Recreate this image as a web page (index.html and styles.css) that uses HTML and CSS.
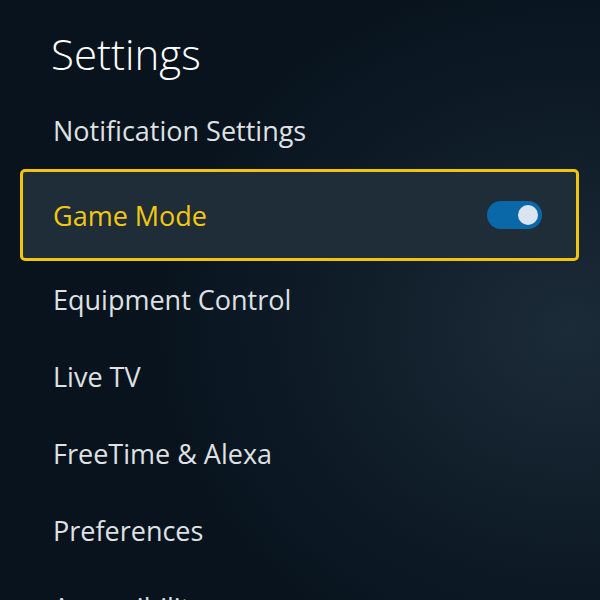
FILE: index.html
```html
<!DOCTYPE html>
<html lang="en">
<head>
<meta charset="utf-8">
<title>Settings</title>
<link rel="stylesheet" href="styles.css">
</head>
<body>
<main class="screen">
  <h1 class="title">Settings</h1>
  <ul class="menu">
    <li class="item">Notification Settings</li>
    <li class="item item-selected">
      <span class="label">Game Mode</span>
      <span class="toggle"><span class="knob"></span></span>
    </li>
    <li class="item">Equipment Control</li>
    <li class="item">Live TV</li>
    <li class="item">FreeTime &amp; Alexa</li>
    <li class="item">Preferences</li>
    <li class="item">Accessibility</li>
  </ul>
</main>
</body>
</html>
```

FILE: styles.css
```css
html, body {
  margin: 0;
  padding: 0;
  height: 100%;
  overflow: hidden;
}

body {
  background: radial-gradient(ellipse 70% 60% at 95% 55%, #1b2b37 0%, #0f1d29 55%, #08131d 100%);
  background-color: #0a1520;
  font-family: "Open Sans", "Noto Sans", sans-serif;
  color: #e2e4e6;
}

.screen {
  display: flex;
  flex-direction: column;
}

.title {
  margin: 0;
  height: 92px;
  box-sizing: border-box;
  padding: 25px 0 0 51px;
  font-size: 42px;
  font-weight: 300;
  line-height: 58px;
  color: #ffffff;
}

.menu {
  list-style: none;
  margin: 0;
  padding: 0;
  display: flex;
  flex-direction: column;
}

.item {
  height: 77px;
  display: flex;
  align-items: center;
  padding-left: 53px;
  font-size: 27px;
  font-weight: 400;
  color: #dfe1e3;
}

.item-selected {
  height: 92px;
  box-sizing: border-box;
  margin: 0 21px 0 20px;
  padding: 0 34px 0 30px;
  border: 3px solid #f2c40c;
  border-radius: 5px;
  background: #1f2d39;
  justify-content: space-between;
  color: #f5c80f;
}

.toggle {
  width: 55px;
  height: 28px;
  border-radius: 14px;
  background: #0b68a8;
  display: flex;
  align-items: center;
  justify-content: flex-end;
  padding-right: 4px;
  box-sizing: border-box;
}

.knob {
  width: 20px;
  height: 20px;
  border-radius: 50%;
  background: #dbe5ef;
}
```
